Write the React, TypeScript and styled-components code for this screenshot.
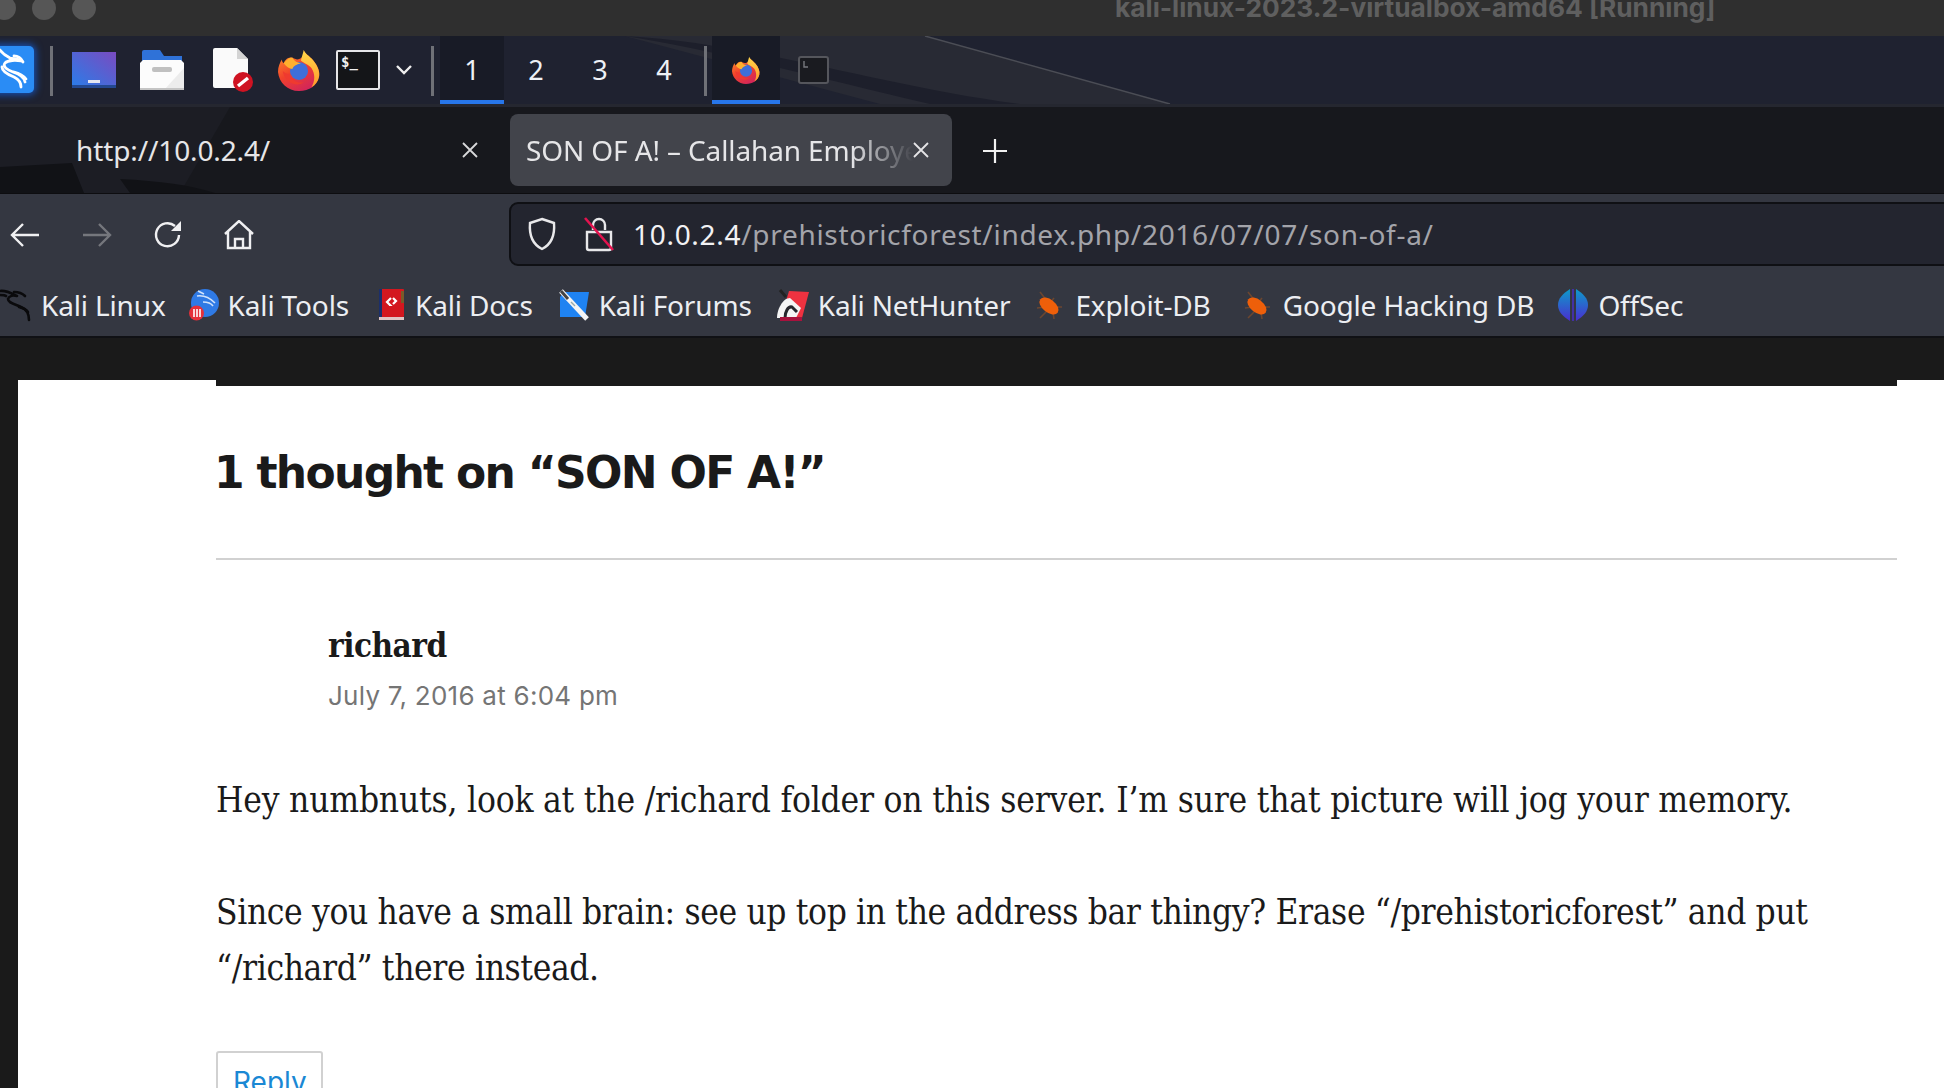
import React from "react";
import styled, { createGlobalStyle } from "styled-components";

const GlobalStyle = createGlobalStyle`
  html, body {
    margin: 0;
    padding: 0;
    background: #1a1a1a;
    overflow: hidden;
  }
  * { box-sizing: border-box; }
`;

const uiFont = `"Noto Sans", "Liberation Sans", sans-serif`;

const Screen = styled.div`
  width: 1944px;
  height: 1088px;
  overflow: hidden;
  display: flex;
  flex-direction: column;
`;

const TitleBar = styled.div`
  flex: 0 0 36px;
  background: #2f2f2f;
  display: flex;
  overflow: hidden;
`;

const Lights = styled.div`
  display: flex;
  gap: 16px;
  margin: -4px 0 0 -8px;
`;

const Light = styled.span`
  width: 24px;
  height: 24px;
  border-radius: 50%;
  background: #565656;
`;

const WindowTitle = styled.div`
  margin: -7px 0 0 1019px;
  font: 700 26.3px/30px "Inter", ${uiFont};
  color: #5f5f5f;
  white-space: nowrap;
`;

const Panel = styled.div`
  flex: 0 0 71px;
  position: relative;
  background: #1f2230;
  border-bottom: 3px solid #252730;
  display: flex;
  align-items: flex-start;
  overflow: hidden;
`;

const Wallpaper = styled.svg`
  position: absolute;
  inset: 0;
  width: 100%;
  height: 100%;
`;

const KaliTile = styled.div`
  position: relative;
  width: 44px;
  height: 47px;
  margin: 10px 16px 0 -10px;
  background: #2a8cf5;
  border-radius: 5px;
  box-shadow: 0 0 7px 2px #174fb0;
  flex: none;
`;

const PanelSep = styled.span<{ $before?: number; $after: number }>`
  position: relative;
  flex: none;
  width: 3px;
  height: 50px;
  margin: 10px ${(p) => p.$after}px 0 ${(p) => p.$before ?? 0}px;
  background: #6f7177;
`;

const LaunchIcon = styled.span<{ $w: number; $after: number }>`
  position: relative;
  flex: none;
  width: ${(p) => p.$w}px;
  height: 68px;
  margin-right: ${(p) => p.$after}px;
  display: flex;
  align-items: center;
  justify-content: center;
`;

const Workspace = styled.span<{ $active?: boolean }>`
  position: relative;
  flex: none;
  width: 64px;
  height: 68px;
  display: flex;
  align-items: center;
  justify-content: center;
  padding-top: 3px;
  font: 400 27px ${uiFont};
  color: #eef1f6;
  background: ${(p) => (p.$active ? "#181b26" : "transparent")};
  border-bottom: 4px solid ${(p) => (p.$active ? "#2776ea" : "transparent")};
`;

const TaskButton = styled.span<{ $active?: boolean; $w: number; $after: number }>`
  position: relative;
  flex: none;
  width: ${(p) => p.$w}px;
  height: 68px;
  margin-right: ${(p) => p.$after}px;
  display: flex;
  align-items: center;
  justify-content: center;
  padding-top: 3px;
  background: ${(p) => (p.$active ? "#181b26" : "transparent")};
  border-bottom: 4px solid ${(p) => (p.$active ? "#2776ea" : "transparent")};
`;

const TabStrip = styled.div`
  flex: 0 0 87px;
  position: relative;
  background: #17181d;
  border-bottom: 1px solid #0d0d10;
  display: flex;
  align-items: center;
  overflow: hidden;
`;

const Tab = styled.div<{ $active?: boolean; $w: number }>`
  position: relative;
  flex: none;
  width: ${(p) => p.$w}px;
  height: 72px;
  display: flex;
  align-items: center;
  justify-content: space-between;
  background: ${(p) => (p.$active ? "#42444b" : "transparent")};
  border-radius: 8px;
  padding: ${(p) => (p.$active ? "0 23px 0 16px" : "0 32px 0 76px")};
  color: #e6e6e8;
`;

const TabTitle = styled.span<{ $fade?: boolean }>`
  font: 400 28px ${uiFont};
  letter-spacing: -0.12px;
  white-space: nowrap;
  overflow: hidden;
  flex: 1;
  min-width: 0;
  ${(p) =>
    p.$fade &&
    `mask-image: linear-gradient(to right, #000 84%, transparent 100%);`}
`;

const NewTab = styled.span`
  margin: 2px 0 0 30px;
  display: flex;
  color: #f1f1f1;
`;

const NavBar = styled.div`
  flex: 0 0 72px;
  background: #343741;
  display: flex;
  align-items: center;
  padding: 8px 0 0 10px;
`;

const NavButton = styled.span<{ $after: number; $dim?: boolean }>`
  flex: none;
  width: 30px;
  display: flex;
  justify-content: center;
  margin: 2px ${(p) => p.$after}px 0 0;
  color: ${(p) => (p.$dim ? "#75777d" : "#f0f0f2")};
`;

const UrlBar = styled.div`
  flex: 1;
  margin: 0 -20px 0 255px;
  height: 64px;
  background: #23252f;
  border: 2px solid #0f1014;
  border-radius: 9px;
  display: flex;
  align-items: center;
  padding-left: 16px;
  color: #e8e8ea;
`;

const UrlIcon = styled.span<{ $after: number }>`
  display: flex;
  flex: none;
  margin-right: ${(p) => p.$after}px;
`;

const UrlText = styled.span`
  font: 400 28px ${uiFont};
  letter-spacing: 0.7px;
  color: #a3a4aa;
  white-space: nowrap;

  b {
    font-weight: 400;
    color: #f2f2f4;
  }
`;

const Bookmarks = styled.div`
  flex: 0 0 72px;
  background: #343741;
  border-bottom: 2px solid #101115;
  display: flex;
  align-items: center;
  padding-top: 8px;
  overflow: hidden;
`;

const Bookmark = styled.span<{ $left: number; $gap: number }>`
  flex: none;
  display: flex;
  align-items: center;
  gap: ${(p) => p.$gap}px;
  margin-left: ${(p) => p.$left}px;
  font: 400 28px ${uiFont};
  letter-spacing: -0.15px;
  color: #eceef2;
  white-space: nowrap;
`;

const Page = styled.div`
  flex: 1;
  background: #1a1a1a;
  padding: 42px 0 0 18px;
  overflow: hidden;
`;

const Sheet = styled.div`
  height: 100%;
  background: #fff;
  padding-left: 198px;
`;

const Comments = styled.div`
  width: 1681px;
  border-top: 6px solid #1a1a1a;
  color: #1a1a1a;
`;

const CommentsTitle = styled.h2`
  margin: 0;
  height: 174px;
  padding-top: 54px;
  border-bottom: 2px solid #d1d1d1;
  font: 700 44px/66px "DejaVu Sans", "Liberation Sans", sans-serif;
  letter-spacing: -1.7px;
  text-indent: -2px;
`;

const Author = styled.div`
  margin: 65px 0 0 112px;
  font: 700 33px/42px "DejaVu Serif Condensed", "Liberation Serif", serif;
  letter-spacing: -0.5px;
`;

const CommentDate = styled.div`
  margin: 11px 0 0 112px;
  font: 400 26px/36px "Inter", sans-serif;
  color: #757575;
  letter-spacing: 0.25px;
`;

const Body = styled.p<{ $tight?: boolean }>`
  margin: 0 0 56px;
  font: 400 35px/56px "DejaVu Serif Condensed", "Liberation Serif", serif;
  letter-spacing: ${(p) => (p.$tight ? "-0.36px" : "-0.2px")};

  &:first-of-type {
    margin-top: 58px;
  }
`;

const ReplyButton = styled.a`
  display: inline-block;
  margin-top: -1px;
  padding: 9px 14px 10px 15px;
  border: 2px solid #d1d1d1;
  border-radius: 3px;
  font: 400 28px/40px "Inter", sans-serif;
  color: #1a88d4;
`;

const FirefoxIcon: React.FC<{ size: number }> = ({ size }) => (
  <svg width={size} height={size} viewBox="0 0 44 44">
    <defs>
      <linearGradient id="ffBody" x1="0" y1="0" x2="0.6" y2="1">
        <stop offset="0" stopColor="#ff9a2a" />
        <stop offset="0.55" stopColor="#f1412c" />
        <stop offset="1" stopColor="#d42658" />
      </linearGradient>
      <linearGradient id="ffTop" x1="0.5" y1="0" x2="0.5" y2="1">
        <stop offset="0" stopColor="#ffd84a" />
        <stop offset="1" stopColor="#ff9a2a" />
      </linearGradient>
    </defs>
    <path
      d="M27 1c1 4 6 6 10 11 5 6 7 12 6 17-2 9-10 15-21 15C10 44 1 35 0 24c0-5 2-10 4-13 0 2 1 3 2 4 1-3 4-6 7-6 3 0 5 2 7 2 4 0 8-4 7-10z"
      fill="url(#ffBody)"
    />
    <path
      d="M27 1c1 4 6 6 10 11 5 6 7 12 6 17-1 5-4 9-8 11 4-6 4-14 0-20-3-4-8-5-11-8 1-4 2-7 3-11z"
      fill="url(#ffTop)"
    />
    <circle cx="22" cy="23" r="9.5" fill="#3f6fd8" />
    <path d="M6 15c3-4 6-6 9-6 2 3 3 5 9 6-5 1-8 3-9 6-3 0-6-2-9-6z" fill="#ffb02e" />
    <path d="M12 26c2 7 8 10 15 9-7 5-20 1-22-12 2 2 4 3 7 3z" fill="#ef3a2f" />
  </svg>
);

const KaliDragon: React.FC = () => (
  <svg width="32" height="36" viewBox="0 0 32 36" fill="none" stroke="#0a0a0c" strokeWidth="2.6" strokeLinecap="round" strokeLinejoin="round">
    <path d="M0 4c6-1 11 2 17 5-4-1-8 0-9 3 0 4 7 5 13 8 5 2 8 6 8 13" />
    <path d="M14 5c4 0 8 1 11 4" />
    <path d="M19 20c4 1 8 3 9 5" />
    <path d="M0 8c3 0 5 0 6 1" />
  </svg>
);

const LockOff = () => (
  <svg width="30" height="36" viewBox="0 0 30 36" fill="none" stroke="#e8e8ea" strokeWidth="2.4">
    <path d="M9 14V9a6 6 0 0 1 12 0v5" />
    <path d="M3 16v16a2 2 0 0 0 2 2h20a2 2 0 0 0 2-2V16z" />
    <path d="M1 2l28 32" stroke="#e4134f" strokeWidth="2.6" />
  </svg>
);

const Bug: React.FC = () => (
  <svg width="30" height="30" viewBox="0 0 30 30">
    <path d="M6 2l7 9M20 8l-4 5M28 17l-8 0M3 18l8-1M6 28l7-7M20 29l-1-7" stroke="#6b4630" strokeWidth="1.6" />
    <ellipse cx="15" cy="16" rx="11" ry="6.5" transform="rotate(38 15 16)" fill="#ee5f0a" />
  </svg>
);

const bookmarkIcons: Record<string, React.ReactNode> = {
  kali: <KaliDragon />,
  tools: (
    <svg width="30" height="34" viewBox="0 0 30 34">
      <circle cx="16" cy="15" r="14" fill="#2f7ae5" />
      <path d="M8 8c7-1 13 2 18 7M14 14c4 0 8 1 10 4M9 3c2 1 4 2 6 3" stroke="#cfe2fb" strokeWidth="1.6" fill="none" />
      <circle cx="7.5" cy="25" r="7.5" fill="#e5303a" />
      <path d="M5 21v8M8 21v8M11 21v8" stroke="#fff" strokeWidth="1.6" />
    </svg>
  ),
  docs: (
    <svg width="25" height="32" viewBox="0 0 25 32">
      <rect width="25" height="28" rx="1" fill="#d3171f" />
      <rect width="3" height="28" fill="#1b2f6b" />
      <rect x="22" y="2" width="3" height="12" fill="#7a5a2a" />
      <rect y="28" width="25" height="3" fill="#e0c4c4" />
      <path d="M12 9l-4 4 3 3-1 0M14 9l3 3-3 3" stroke="#fff" strokeWidth="2.2" fill="none" />
    </svg>
  ),
  forums: (
    <svg width="32" height="32" viewBox="0 0 32 32">
      <path d="M2 8l4-5h25l-4 25H2z" fill="#1f83f2" />
      <path d="M3 2l26 28" stroke="#f4f4f4" strokeWidth="5" />
      <path d="M3 2l7 8" stroke="#444" strokeWidth="3" />
      <path d="M13 13l4 4" stroke="#9aa" strokeWidth="1.4" />
    </svg>
  ),
  hunter: (
    <svg width="32" height="32" viewBox="0 0 32 32">
      <path d="M12 2l20 1-7 26H4z" fill="#ee3240" />
      <path d="M0 29c0-9 6-20 13-20l11 10-5 10z" fill="#f4f4f4" />
      <path d="M8 29c0-6 3-12 7-11l5 5" stroke="#26262c" strokeWidth="3" fill="none" />
      <path d="M3 30h22" stroke="#a8123d" strokeWidth="4" />
      <path d="M3 1l6 7" stroke="#222" strokeWidth="3" />
    </svg>
  ),
  exploit: <Bug />,
  offsec: (
    <svg width="30" height="34" viewBox="0 0 30 34">
      <defs>
        <linearGradient id="offs" x1="0" y1="0" x2="0" y2="1">
          <stop offset="0" stopColor="#0d9bc9" />
          <stop offset="1" stopColor="#4a2ed0" />
        </linearGradient>
      </defs>
      <path d="M12 1C4 6 0 11 0 17s4 11 12 16z" fill="url(#offs)" />
      <path d="M18 1c8 5 12 10 12 16s-4 11-12 16z" fill="url(#offs)" />
      <path d="M15 1v32" stroke="#4a2ed0" strokeWidth="1.4" />
    </svg>
  ),
};

const bookmarks = [
  { label: "Kali Linux", icon: "kali", left: 0, gap: 9 },
  { label: "Kali Tools", icon: "tools", left: 23, gap: 9 },
  { label: "Kali Docs", icon: "docs", left: 30, gap: 11 },
  { label: "Kali Forums", icon: "forums", left: 25, gap: 9 },
  { label: "Kali NetHunter", icon: "hunter", left: 25, gap: 9 },
  { label: "Exploit-DB", icon: "exploit", left: 24, gap: 11 },
  { label: "Google Hacking DB", icon: "exploit", left: 31, gap: 11 },
  { label: "OffSec", icon: "offsec", left: 24, gap: 10 },
];

export default function App() {
  return (
    <Screen>
      <GlobalStyle />
      <TitleBar>
        <Lights>
          <Light />
          <Light />
          <Light />
        </Lights>
        <WindowTitle>kali-linux-2023.2-virtualbox-amd64 [Running]</WindowTitle>
      </TitleBar>

      <Panel>
        <Wallpaper viewBox="0 0 1944 68" preserveAspectRatio="none">
          <path d="M625 0H925L1170 68H880Z" fill="#282a34" />
          <path d="M625 0C760 8 880 50 1020 68H930C830 45 720 15 625 0Z" fill="#1d1f2b" />
          <path d="M925 0L1170 68" stroke="#4b4d55" strokeWidth="1.5" fill="none" />
        </Wallpaper>
        <KaliTile>
          <svg width="44" height="47" viewBox="0 0 44 47" fill="none" stroke="#fff" strokeWidth="2.8" strokeLinecap="round" strokeLinejoin="round">
            <path d="M10 4c3 4 6 6 10 8 4 1 8 1 11 3-5-1-13-1-16 2-3 4 3 7 8 9 6 2 11 5 12 10" />
            <path d="M24 10c4 0 7 2 9 6" />
            <path d="M12 21c0 5 7 8 12 10 4 2 7 6 7 10" />
            <path d="M24 26c4 1 9 3 12 7" />
          </svg>
        </KaliTile>
        <PanelSep $after={19} />
        <LaunchIcon $w={44} $after={24}>
          <svg width="44" height="36" viewBox="0 0 44 36">
            <defs>
              <linearGradient id="desk" x1="0" y1="1" x2="1" y2="0">
                <stop offset="0" stopColor="#2a7de8" />
                <stop offset="1" stopColor="#7a4bc0" />
              </linearGradient>
            </defs>
            <rect width="44" height="35" fill="url(#desk)" />
            <rect y="33" width="44" height="3" fill="#23488f" />
            <rect x="16" y="28" width="12" height="3" fill="#e4e6f0" />
          </svg>
        </LaunchIcon>
        <LaunchIcon $w={44} $after={29}>
          <svg width="44" height="40" viewBox="0 0 44 40">
            <path d="M2 2a2 2 0 0 1 2-2h16l4 6h18v6H2z" fill="#2f72d8" />
            <path d="M3 10h38l3 3v27H0V13z" fill="#fcfcfc" />
            <path d="M24 40L44 18v22z" fill="#ececec" />
            <rect y="38" width="44" height="2" fill="#c4c4c4" />
            <rect x="12" y="17" width="20" height="5" rx="2" fill="#c0c0c0" />
          </svg>
        </LaunchIcon>
        <LaunchIcon $w={42} $after={23}>
          <svg width="42" height="44" viewBox="0 0 42 44">
            <path d="M0 2a2 2 0 0 1 2-2h22l11 11v29H2a2 2 0 0 1-2-2z" fill="#fafafa" />
            <path d="M24 0l11 11H24z" fill="#d4d4d4" />
            <circle cx="30" cy="34" r="10" fill="#cf1322" />
            <path d="M25 38l10-8" stroke="#fff" strokeWidth="3.4" />
          </svg>
        </LaunchIcon>
        <LaunchIcon $w={42} $after={16}>
          <FirefoxIcon size={42} />
        </LaunchIcon>
        <LaunchIcon $w={44} $after={16}>
          <svg width="44" height="40" viewBox="0 0 44 40">
            <rect x="1" y="1" width="42" height="38" rx="1" fill="#141518" stroke="#e6e6e8" strokeWidth="2" />
            <text x="5" y="17" fontFamily="DejaVu Sans Mono" fontSize="14" fontWeight="700" fill="#f1f1f1">
              $_
            </text>
          </svg>
        </LaunchIcon>
        <LaunchIcon $w={16} $after={19}>
          <svg width="16" height="10" viewBox="0 0 16 10" fill="none" stroke="#eee" strokeWidth="2.4">
            <path d="M1 1l7 7 7-7" />
          </svg>
        </LaunchIcon>
        <PanelSep $after={6} />
        <Workspace $active>1</Workspace>
        <Workspace>2</Workspace>
        <Workspace>3</Workspace>
        <Workspace>4</Workspace>
        <PanelSep $before={8} $after={5} />
        <TaskButton $active $w={68} $after={18}>
          <FirefoxIcon size={28} />
        </TaskButton>
        <TaskButton $w={31} $after={0}>
          <svg width="31" height="28" viewBox="0 0 31 28">
            <rect x="1" y="1" width="29" height="26" rx="2" fill="#1a1b20" stroke="#55565c" strokeWidth="2" />
            <path d="M6 5v6h4" stroke="#77787e" strokeWidth="1.4" fill="none" />
          </svg>
        </TaskButton>
      </Panel>

      <TabStrip>
        <Wallpaper viewBox="0 0 1944 86" preserveAspectRatio="none">
          <path d="M0 0H230L180 86H0Z" fill="#1c1d24" />
          <path d="M0 60L72 56L84 86H0Z" fill="#111216" />
          <path d="M120 72C160 74 190 78 215 86H130Z" fill="#111216" />
        </Wallpaper>
        <Tab $w={510}>
          <TabTitle>http://10.0.2.4/</TabTitle>
          <svg width="16" height="16" viewBox="0 0 16 16" stroke="#d8d8da" strokeWidth="1.8">
            <path d="M1 1l14 14M15 1L1 15" />
          </svg>
        </Tab>
        <Tab $active $w={442}>
          <TabTitle $fade>SON OF A! – Callahan Employee Portal</TabTitle>
          <svg width="16" height="16" viewBox="0 0 16 16" stroke="#e4e4e6" strokeWidth="1.8">
            <path d="M1 1l14 14M15 1L1 15" />
          </svg>
        </Tab>
        <NewTab>
          <svg width="26" height="26" viewBox="0 0 26 26" stroke="currentColor" strokeWidth="2.2">
            <path d="M13 1v24M1 13h24" />
          </svg>
        </NewTab>
      </TabStrip>

      <NavBar>
        <NavButton $after={42}>
          <svg width="30" height="26" viewBox="0 0 30 26" fill="none" stroke="currentColor" strokeWidth="2.4">
            <path d="M13 2L2 13l11 11M2 13h27" />
          </svg>
        </NavButton>
        <NavButton $after={41} $dim>
          <svg width="30" height="26" viewBox="0 0 30 26" fill="none" stroke="currentColor" strokeWidth="2.4">
            <path d="M17 2l11 11-11 11M28 13H1" />
          </svg>
        </NavButton>
        <NavButton $after={41}>
          <svg width="30" height="30" viewBox="0 0 30 30" fill="none" stroke="currentColor" strokeWidth="2.4">
            <path d="M26 15a11.5 11.5 0 1 1-4-9" />
            <path d="M28 1v10H18z" fill="currentColor" stroke="none" />
          </svg>
        </NavButton>
        <NavButton $after={0}>
          <svg width="30" height="30" viewBox="0 0 30 30" fill="none" stroke="currentColor" strokeWidth="2.4">
            <path d="M1 14L15 1l14 13M4 11v17h22V11" />
            <path d="M11 28v-9h8v9" />
          </svg>
        </NavButton>
        <UrlBar>
          <UrlIcon $after={27}>
            <svg width="30" height="34" viewBox="0 0 30 34" fill="none" stroke="#e8e8ea" strokeWidth="2.4">
              <path d="M15 2l12 4c1 12-2 21-12 26C5 27 2 18 3 6z" />
            </svg>
          </UrlIcon>
          <UrlIcon $after={19}>
            <LockOff />
          </UrlIcon>
          <UrlText>
            <b>10.0.2.4</b>/prehistoricforest/index.php/2016/07/07/son-of-a/
          </UrlText>
        </UrlBar>
      </NavBar>

      <Bookmarks>
        {bookmarks.map((b) => (
          <Bookmark key={b.label} $left={b.left} $gap={b.gap}>
            {bookmarkIcons[b.icon]}
            {b.label}
          </Bookmark>
        ))}
      </Bookmarks>

      <Page>
        <Sheet>
          <Comments>
            <CommentsTitle>1 thought on “SON OF A!”</CommentsTitle>
            <Author>richard</Author>
            <CommentDate>July 7, 2016 at 6:04 pm</CommentDate>
            <Body>Hey numbnuts, look at the /richard folder on this server. I’m sure that picture will jog your memory.</Body>
            <Body $tight>
              Since you have a small brain: see up top in the address bar thingy? Erase “/prehistoricforest” and put
              “/richard” there instead.
            </Body>
            <ReplyButton>Reply</ReplyButton>
          </Comments>
        </Sheet>
      </Page>
    </Screen>
  );
}
